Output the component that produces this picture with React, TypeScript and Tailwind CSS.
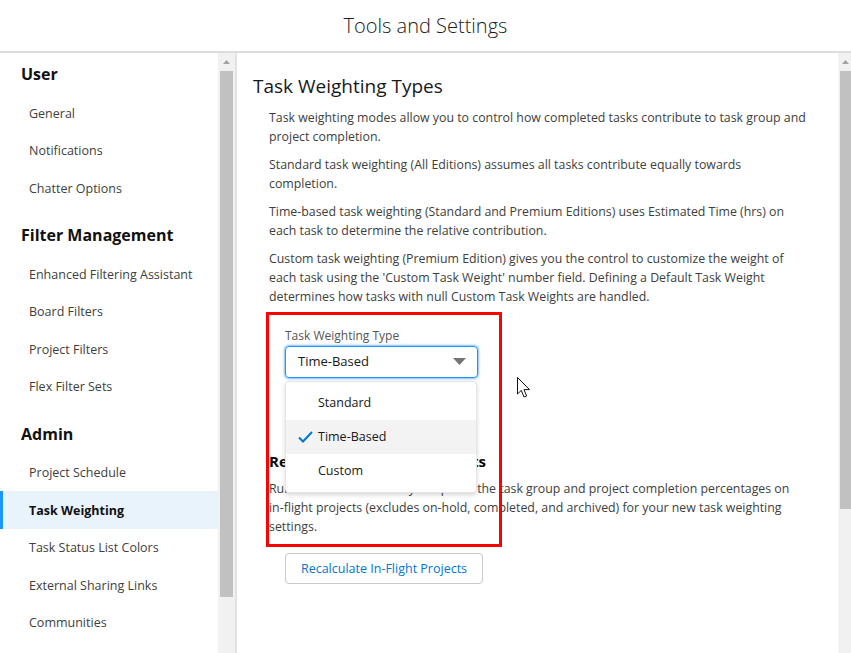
import React from "react";

const font = { fontFamily: '"Open Sans", "Noto Sans", sans-serif' };

function NavHeading({ label, first }: { label: string; first?: boolean }) {
  return (
    <div className={`h-[24px] leading-[24px] pl-[21px] text-[16px] font-bold text-[#111] mb-[8px] ${first ? "" : "mt-[16.5px]"}`}>
      {label}
    </div>
  );
}

function NavItem({ label, active }: { label: string; active?: boolean }) {
  return (
    <div
      className={`h-[37.5px] flex items-center pt-[3px] text-[12.5px] ${
        active ? "bg-[#e8f3fc] border-l-[3px] border-[#1b96ff] pl-[26px] font-bold text-[#111]" : "pl-[29px] text-[#3e3e3c]"
      }`}
    >
      {label}
    </div>
  );
}

function ScrollBar({ thumbEnd, narrow }: { thumbEnd: string; narrow?: boolean }) {
  return (
    <div className={`${narrow ? "w-[13px] items-end" : "w-[17px] items-center"} h-full bg-[#f1f1f1] flex flex-col`}>
      <div className={`h-[18px] flex items-center justify-center ${narrow ? "w-[11px]" : ""}`}>
        <svg width="7" height="4" viewBox="0 0 7 4">
          <path d="M0 4 L3.5 0 L7 4 Z" fill="#a3a3a3" />
        </svg>
      </div>
      <div className={`${narrow ? "w-[11px]" : "w-[13px]"} bg-[#c1c1c1] ${thumbEnd}`} />
    </div>
  );
}

export default function App() {
  return (
    <div className="w-[851px] h-[653px] bg-white overflow-hidden flex flex-col" style={font}>
      {/* header */}
      <div className="h-[53px] shrink-0 border-b-2 border-[#dcdcdc] flex items-center justify-center">
        <h1 className="text-[20px] text-[#1a1a1a] font-light">Tools and Settings</h1>
      </div>

      <div className="flex flex-1 min-h-0">
        {/* sidebar */}
        <div className="w-[218px] shrink-0 pt-[9px]">
          <NavHeading label="User" first />
          <NavItem label="General" />
          <NavItem label="Notifications" />
          <NavItem label="Chatter Options" />
          <NavHeading label="Filter Management" />
          <NavItem label="Enhanced Filtering Assistant" />
          <NavItem label="Board Filters" />
          <NavItem label="Project Filters" />
          <NavItem label="Flex Filter Sets" />
          <NavHeading label="Admin" />
          <NavItem label="Project Schedule" />
          <NavItem label="Task Weighting" active />
          <NavItem label="Task Status List Colors" />
          <NavItem label="External Sharing Links" />
          <NavItem label="Communities" />
        </div>
        <ScrollBar thumbEnd="h-[526px]" />
        <div className="w-[2px] bg-[#e2e2e2]" />

        {/* main */}
        <div className="relative flex-1 pl-4 pt-5 text-[#3e3e3c]">
          <h2 className="text-[19px] leading-[26px] text-[#181818]">Task Weighting Types</h2>
          <div className="pl-4 mt-[8.5px] w-[557px] text-[12.35px] leading-[19px]">
            <p>
              Task weighting modes allow you to control how completed tasks contribute to task group and project completion.
            </p>
            <p className="mt-[9px]">
              Standard task weighting (All Editions) assumes all tasks contribute equally towards completion.
            </p>
            <p className="mt-[9px]">
              Time-based task weighting (Standard and Premium Editions) uses Estimated Time (hrs) on each task to determine the relative contribution.
            </p>
            <p className="mt-[9px]">
              Custom task weighting (Premium Edition) gives you the control to customize the weight of each task using the 'Custom Task Weight' number field. Defining a Default Task Weight determines how tasks with null Custom Task Weights are handled.
            </p>

            {/* select */}
            <div className="pl-4 mt-[22px]">
              <div className="text-[12px] leading-[16px] text-[#555]">Task Weighting Type</div>
              <div className="relative mt-[2px] w-[193px]">
                <div className="h-[32px] rounded-[4px] border border-[#1b96ff] shadow-[0_0_3px_#0176d3] flex items-center justify-between pl-[12px] pr-[11px] text-[13px] text-[#181818]">
                  <span>Time-Based</span>
                  <svg width="13" height="7" viewBox="0 0 13 7">
                    <path d="M0 0 H13 L6.5 7 Z" fill="#747474" />
                  </svg>
                </div>
                <div className="absolute left-0 top-[35px] w-[192px] z-10 bg-white border border-[#e5e5e5] rounded-[4px] shadow-[0_2px_4px_rgba(0,0,0,0.16)] py-[4px] text-[12.5px] text-[#181818]">
                  <div className="h-[34px] flex items-center pl-[32px]">Standard</div>
                  <div className="h-[34px] flex items-center bg-[#f3f3f3] pl-[12px]">
                    <svg width="15" height="12" viewBox="0 0 15 12" className="mr-[5px]">
                      <path d="M1 6.5 L5 10.5 L14 1" fill="none" stroke="#0176d3" strokeWidth="2" />
                    </svg>
                    Time-Based
                  </div>
                  <div className="h-[34px] flex items-center pl-[32px]">Custom</div>
                </div>
              </div>
            </div>

            <h3 className="mt-[73px] text-[15px] leading-[20px] font-bold text-[#080707]">Recalculate In-Flight Projects</h3>
            <p className="mt-[8.5px]">
              Run the recalculate utility to update the task group and project completion percentages on{" "}
              <span className="whitespace-nowrap">in-flight</span> projects (excludes on-hold, completed, and archived) for your new task weighting settings.
            </p>
            <div className="pl-4 mt-[16.5px]">
              <button className="h-[31px] w-[198px] rounded-[4px] border border-[#c9c9c9] text-[#0176d3] text-[12.5px] bg-white">
                Recalculate In-Flight Projects
              </button>
            </div>
          </div>

          {/* annotation box */}
          <div className="absolute left-[29px] top-[259px] w-[236px] h-[235px] border-[3px] border-[#ff0000] pointer-events-none" />

          {/* mouse cursor */}
          <svg className="absolute left-[280px] top-[324px]" width="14" height="22" viewBox="0 0 14 22">
            <path d="M0.5 0.5 L0.5 17 L4.3 13.4 L7 20 L9.6 19 L7 12.6 L12.5 12.6 Z" fill="white" stroke="#111" strokeWidth="1" />
          </svg>
        </div>
        <ScrollBar thumbEnd="h-[438px]" narrow />
      </div>
    </div>
  );
}
